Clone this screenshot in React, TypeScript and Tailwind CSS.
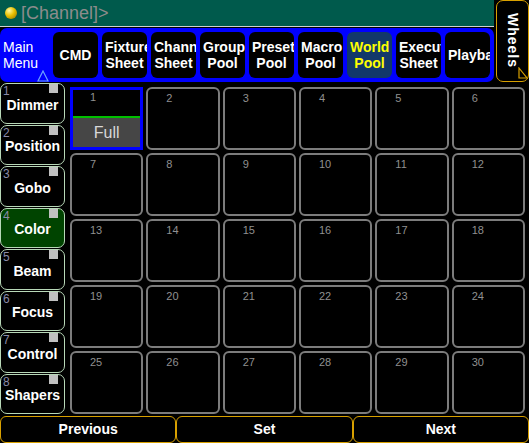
const menuButtons = [
  ["CMD"],
  ["Fixture", "Sheet"],
  ["Channel", "Sheet"],
  ["Group", "Pool"],
  ["Preset", "Pool"],
  ["Macro", "Pool"],
  ["World", "Pool"],
  ["Executor", "Sheet"],
  ["Playback"],
];

const presetTypes = [
  "Dimmer",
  "Position",
  "Gobo",
  "Color",
  "Beam",
  "Focus",
  "Control",
  "Shapers",
];

const font = { fontFamily: '"Liberation Sans", Arial, sans-serif' };

// long labels get clipped on the right, short ones stay centred
const MenuButton = ({ lines, active }: { lines: string[]; active?: boolean }) => (
  <div
    className={`w-[45px] h-[46px] shrink-0 rounded-[6px] overflow-hidden px-[3px] flex flex-col [align-items:safe_center] justify-center font-bold text-[14px] leading-[16px] ${
      active ? "bg-[#12386a] text-[#ffff00]" : "bg-black text-white"
    }`}
  >
    {lines.map((l) => (
      <span key={l} className="whitespace-nowrap">
        {l}
      </span>
    ))}
  </div>
);

const PresetTypeButton = ({
  label,
  index,
  active,
}: {
  label: string;
  index: number;
  active?: boolean;
}) => (
  <div
    className={`relative h-[40.5px] rounded-[7px] border border-[#b8d8b8] flex items-center justify-center font-bold text-[14px] text-white ${
      active ? "bg-[#004400]" : "bg-black"
    }`}
  >
    <span className="absolute left-[2px] top-0 text-[12px] leading-[14px] font-normal text-[#8a8aa8]">
      {index}
    </span>
    <span className="absolute right-[6px] top-0 w-[9px] h-[9px] bg-[#c0c0c0]" />
    <span className="mt-[4px] whitespace-nowrap">{label}</span>
  </div>
);

const PoolCell = ({ n }: { n: number }) => {
  if (n === 1) {
    return (
      <div className="border-[3px] border-[#0000ff] flex flex-col">
        <div className="h-[26px] bg-black text-[11px] text-[#909090] pl-[17px] leading-[14px]">
          1
        </div>
        <div className="h-[2px] bg-[#00c000]" />
        <div className="flex-1 bg-[#464646] text-[#d8d8d8] text-[16px] flex items-center justify-center">
          Full
        </div>
      </div>
    );
  }
  return (
    <div className="rounded-[6px] border-2 border-[#7c7c7c] bg-black text-[11px] text-[#909090] pl-[18px] pt-[2px] leading-[14px]">
      {n}
    </div>
  );
};

export default function App() {
  return (
    <div className="w-[529px] h-[443px] bg-black overflow-hidden flex flex-col select-none" style={font}>
      {/* header: command line + main menu strip, wheels tab on the right */}
      <div className="flex h-[83px]">
        <div className="flex-1 flex flex-col">
          <div className="h-[27px] bg-[#005a4c] border-b border-[#d0d0d0] flex items-center gap-[4px] pl-[5px]">
            <span className="w-[12px] h-[12px] rounded-full bg-[radial-gradient(circle_at_35%_30%,#fff8a0,#e8c000_45%,#8a6a00)]" />
            <span className="text-[18px] text-[#8c8c8c]">[Channel]&gt;</span>
          </div>
          <div className="relative mt-px h-[54px] bg-[#0000ff] rounded-[7px] flex items-center gap-[4px] pl-[53px] pr-[3px] overflow-hidden">
            <div className="absolute left-[3px] top-[11px] text-[14px] leading-[16px] text-white">
              Main
              <br />
              Menu
            </div>
            <svg className="absolute left-[37px] bottom-0" width="12" height="12" viewBox="0 0 12 12">
              <path d="M6 1 L11 11 L1 11 Z" fill="none" stroke="#6aa0ff" strokeWidth="1.2" />
            </svg>
            {menuButtons.map((b, i) => (
              <MenuButton key={i} lines={b} active={i === 6} />
            ))}
          </div>
        </div>
        <div className="relative w-[33px] ml-[2px] h-[82px] rounded-[7px] border border-[#d8a000] bg-black flex items-center justify-center">
          <span className="font-bold text-[14px] text-white tracking-[1px] [writing-mode:vertical-rl]">
            Wheels
          </span>
          <svg className="absolute right-0 bottom-[2px]" width="10" height="12" viewBox="0 0 10 12">
            <path d="M1 1 L9 11 L1 11 Z" fill="none" stroke="#d8a000" strokeWidth="1.2" />
          </svg>
        </div>
      </div>

      {/* preset types + pool grid */}
      <div className="flex h-[333px]">
        <div className="w-[65px] flex flex-col gap-px">
          {presetTypes.map((t, i) => (
            <PresetTypeButton key={t} label={t} index={i + 1} active={i === 3} />
          ))}
        </div>
        <div className="flex-1 grid grid-cols-6 grid-rows-5 gap-[3px] pl-[5px] pr-[4px] pt-[4px] pb-[2px]">
          {Array.from({ length: 30 }, (_, i) => (
            <PoolCell key={i} n={i + 1} />
          ))}
        </div>
      </div>

      {/* bottom actions */}
      <div className="flex-1 flex">
        {["Previous", "Set", "Next"].map((l) => (
          <div
            key={l}
            className="flex-1 rounded-[6px] border border-[#d8a000] flex items-center justify-center font-bold text-[14px] text-white"
          >
            {l}
          </div>
        ))}
      </div>
    </div>
  );
}
